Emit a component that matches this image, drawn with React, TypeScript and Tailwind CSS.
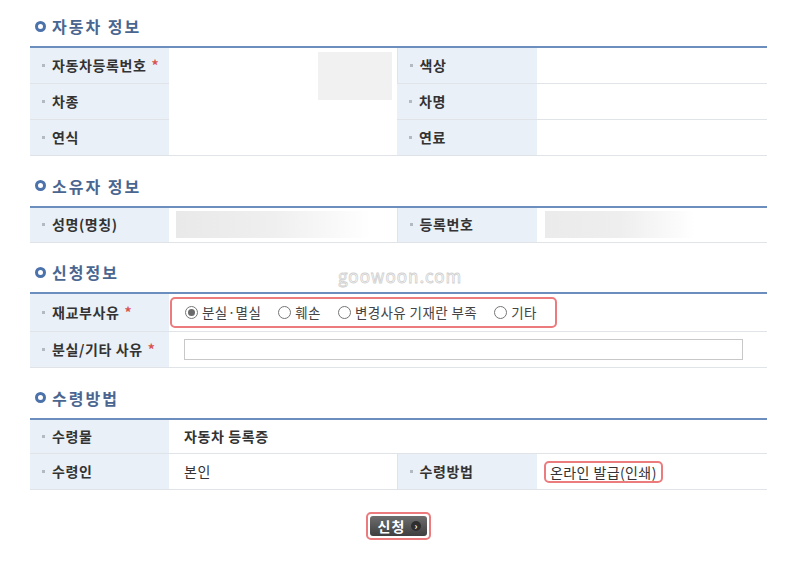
import React from "react";

const FONT = { fontFamily: '"Noto Sans CJK KR", "Noto Sans", sans-serif' };

function Heading({ title, children }: { title: string; children?: React.ReactNode }) {
  return (
    <div className="relative flex h-5 items-center gap-1.5 mb-2.5 pl-[5px]">
      <span className="size-[11px] rounded-full border-[3px] border-[#4c72ab]" />
      <span className="text-[16px] font-bold leading-5 tracking-[2px] text-[#4a6690]">{title}</span>
      {children}
    </div>
  );
}

function Label({ text, req, h = "h-9", extra = "" }: { text: string; req?: boolean; h?: string; extra?: string }) {
  return (
    <td className={`${h} ${extra} w-[139px] bg-[#eaf0f7] border-b border-[#e0e3e8] pl-3 text-[14px] font-bold tracking-[0.6px] text-[#333]`}>
      <span className="flex items-center gap-[7px]">
        <span className="size-[3px] bg-[#b5b9c0]" />
        <span>{text}</span>
        {req && <span className="text-[#d9534f] -ml-0.5">*</span>}
      </span>
    </td>
  );
}

function Radio({ label, on }: { label: string; on?: boolean }) {
  return (
    <span className="flex items-center gap-1">
      <span className="grid size-[13px] place-items-center rounded-full border border-[#767676] bg-white">
        {on && <span className="size-[7px] rounded-full bg-[#6a6a6a]" />}
      </span>
      <span>{label}</span>
    </span>
  );
}

function Table({ children }: { children: React.ReactNode }) {
  return (
    <table className="w-[737px] table-fixed border-collapse border-t-2 border-[#6b8ebf]">
      <colgroup>
        <col className="w-[139px]" />
        <col className="w-[228px]" />
        <col className="w-[140px]" />
        <col className="w-[230px]" />
      </colgroup>
      <tbody>{children}</tbody>
    </table>
  );
}

const val = "border-b border-[#e0e3e8] px-[15px] text-[14px] tracking-[0.6px] text-[#333]";

export default function App() {
  return (
    <div style={FONT} className="w-[800px] h-[566px] bg-white pl-[30px] pt-4">
      {/* 자동차 정보 */}
      <Heading title="자동차 정보" />
      <Table>
        <tr>
          <Label text="자동차등록번호" req />
          <td rowSpan={3} className="relative border-b border-[#e0e3e8]">
            <div className="absolute left-[149px] top-[4px] h-[48px] w-[74px] bg-[#f1f1f1]" />
          </td>
          <Label text="색상" extra="border-l" />
          <td className={val} />
        </tr>
        <tr>
          <Label text="차종" />
          <Label text="차명" />
          <td className={val} />
        </tr>
        <tr>
          <Label text="연식" />
          <Label text="연료" />
          <td className={val} />
        </tr>
      </Table>

      {/* 소유자 정보 */}
      <div className="mt-5">
        <Heading title="소유자 정보" />
        <Table>
          <tr>
            <Label text="성명(명칭)" />
            <td className="border-b border-[#e0e3e8] px-[7px]">
              <div className="h-[27px] w-[195px] bg-gradient-to-r from-[#e9e9e9] via-[#efefef] to-white" />
            </td>
            <Label text="등록번호" extra="border-l" />
            <td className="border-b border-[#e0e3e8] px-[8px]">
              <div className="h-[27px] w-[150px] bg-gradient-to-r from-[#ebebeb] via-[#eeeeee] to-white" />
            </td>
          </tr>
        </Table>
      </div>

      {/* 신청정보 */}
      <div className="mt-[19px]">
        <Heading title="신청정보">
          <span className="absolute left-[308px] top-[1px] text-[17px] tracking-[1px] text-transparent [-webkit-text-stroke:0.8px_#d0d0d0]">
            goowoon.com
          </span>
        </Heading>
        <Table>
          <tr>
            <Label text="재교부사유" req h="h-[38px]" />
            <td colSpan={3} className="border-b border-[#e0e3e8] pl-px text-[13.5px] tracking-[0.4px] text-[#444]">
              <div className="flex h-[31px] w-[387px] items-center gap-[17px] rounded-[5px] border-2 border-[#ec7b7e] pl-[13px]">
                <Radio label="분실·멸실" on />
                <Radio label="훼손" />
                <Radio label="변경사유 기재란 부족" />
                <Radio label="기타" />
              </div>
            </td>
          </tr>
          <tr>
            <Label text="분실/기타 사유" req />
            <td colSpan={3} className={val}>
              <input className="block h-[21px] w-[559px] border border-[#c8c8c8] bg-white outline-none" />
            </td>
          </tr>
        </Table>
      </div>

      {/* 수령방법 */}
      <div className="mt-5">
        <Heading title="수령방법" />
        <Table>
          <tr>
            <Label text="수령물" h="h-[35px]" />
            <td colSpan={3} className={`${val} font-bold text-[#111]`}>자동차 등록증</td>
          </tr>
          <tr>
            <Label text="수령인" />
            <td className={val}>본인</td>
            <Label text="수령방법" extra="border-l" />
            <td className="border-b border-[#e0e3e8] pl-[7px] text-[14px] tracking-[0.4px] text-[#333]">
              <span className="inline-block rounded-[5px] border-2 border-[#ec7b7e] px-[4px] leading-[18px]">
                온라인 발급(인쇄)
              </span>
            </td>
          </tr>
        </Table>
      </div>

      <div className="mt-[22px] flex w-[737px] justify-center">
        <div className="rounded-[5px] border-2 border-[#ec7b7e] p-[2px]">
          <button className="flex h-[20px] items-center gap-[6px] rounded-[3px] bg-gradient-to-b from-[#6e6e6e] to-[#3f3f3f] pl-[8px] pr-[6px] text-[14px] font-bold tracking-[1px] text-white">
            신청
            <span className="grid size-[10px] place-items-center rounded-full bg-[#2e2e2e] text-[9px] leading-none">›</span>
          </button>
        </div>
      </div>
    </div>
  );
}
